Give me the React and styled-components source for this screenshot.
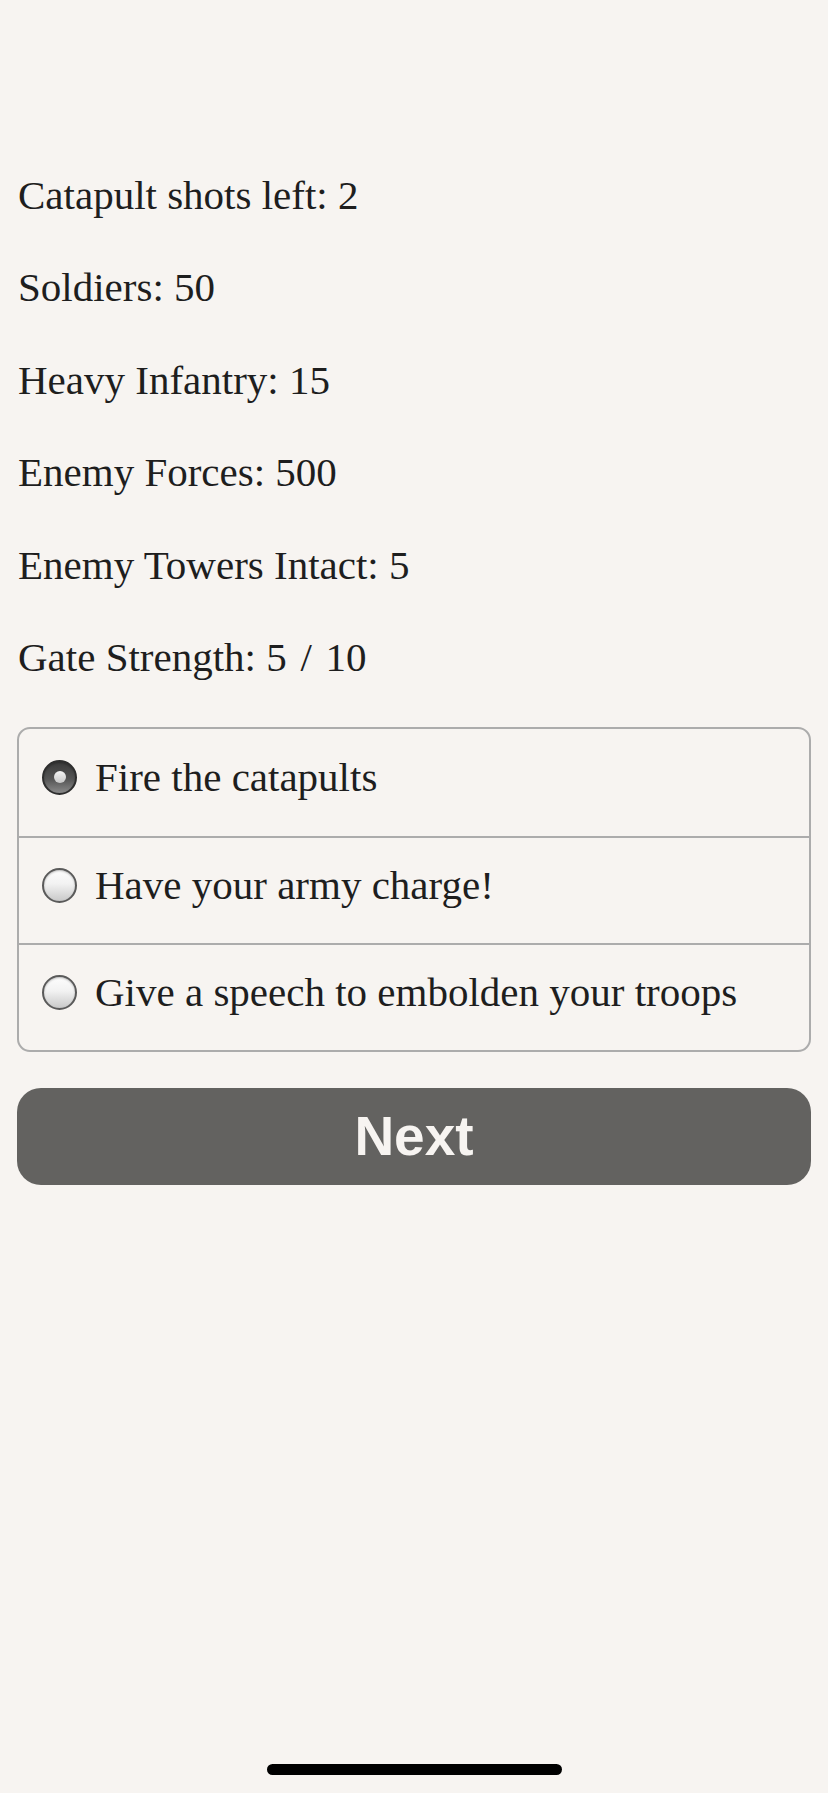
import React, { useState } from 'react';
import styled, { createGlobalStyle } from 'styled-components';

const GlobalStyle = createGlobalStyle`
  html, body {
    margin: 0;
    padding: 0;
    background: #f7f4f1;
  }
  body {
    font-family: "Liberation Serif", "Times New Roman", serif;
    color: #1e1e1e;
  }
`;

const Page = styled.div`
  min-height: 1793px;
  box-sizing: border-box;
  padding: 171px 17px 0;
  background: #f7f4f1;
`;

const Stats = styled.div`
  display: flex;
  flex-direction: column;
  gap: 44.4px;
`;

const StatLine = styled.p`
  margin: 0;
  font-size: 41px;
  line-height: 48px;
  padding-left: 1px;
`;

const Options = styled.div`
  margin-top: 46px;
  border: 2px solid #acacac;
  border-radius: 13px;
  overflow: hidden;
`;

const Option = styled.label`
  display: flex;
  align-items: center;
  gap: 18px;
  height: 107px;
  box-sizing: border-box;
  padding: 0 0 10px 23px;
  font-size: 41px;
  line-height: 48px;
  cursor: pointer;
  & + & {
    border-top: 2px solid #acacac;
  }
`;

const Radio = styled.span`
  position: relative;
  flex: none;
  width: 35px;
  height: 35px;
  box-sizing: border-box;
  border-radius: 50%;
  border: 2px solid ${p => (p.checked ? '#2e2e2e' : '#5a5a5a')};
  background: ${p =>
    p.checked
      ? 'linear-gradient(180deg, #3a3a3a 0%, #555 55%, #8a8a8a 100%)'
      : 'linear-gradient(180deg, #fdfdfd 0%, #f2f2f2 45%, #c9c9c9 100%)'};
  box-shadow: inset 0 1px 2px rgba(0, 0, 0, 0.25);

  &::after {
    content: '';
    display: ${p => (p.checked ? 'block' : 'none')};
    position: absolute;
    left: 50%;
    top: 50%;
    width: 12px;
    height: 12px;
    margin: -6px 0 0 -6px;
    border-radius: 50%;
    background: linear-gradient(180deg, #f4f4f4, #c8c8c8);
  }
`;

const NextButton = styled.button`
  display: block;
  width: 100%;
  height: 97px;
  margin-top: 36px;
  border: none;
  border-radius: 24px;
  background: #636260;
  color: #f7f4f1;
  font-family: "Liberation Sans", Arial, sans-serif;
  font-weight: 700;
  font-size: 55px;
  line-height: 97px;
  padding: 0;
  cursor: pointer;
`;

const HomeIndicator = styled.div`
  position: fixed;
  left: 50%;
  bottom: 18px;
  width: 295px;
  height: 11px;
  margin-left: -147px;
  border-radius: 6px;
  background: #000;
`;

const stats = [
  'Catapult shots left: 2',
  'Soldiers: 50',
  'Heavy Infantry: 15',
  'Enemy Forces: 500',
  'Enemy Towers Intact: 5',
  'Gate Strength: 5\u2004/\u200410',
];

const choices = [
  'Fire the catapults',
  'Have your army charge!',
  'Give a speech to embolden your troops',
];

export default function App() {
  const [picked, setPicked] = useState(0);

  return (
    <Page>
      <GlobalStyle />
      <Stats>
        {stats.map(s => (
          <StatLine key={s}>{s}</StatLine>
        ))}
      </Stats>
      <Options>
        {choices.map((c, i) => (
          <Option key={c} onClick={() => setPicked(i)}>
            <Radio checked={picked === i} />
            {c}
          </Option>
        ))}
      </Options>
      <NextButton>Next</NextButton>
      <HomeIndicator />
    </Page>
  );
}
